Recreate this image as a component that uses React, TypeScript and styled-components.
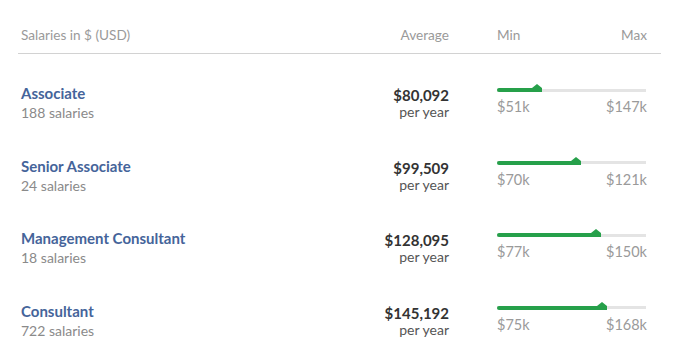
import styled, { createGlobalStyle } from "styled-components";

interface SalaryRow {
  title: string;
  count: number;
  average: string;
  min: string;
  max: string;
  fill: number;
}

const rows: SalaryRow[] = [
  { title: "Associate", count: 188, average: "$80,092", min: "$51k", max: "$147k", fill: 27 },
  { title: "Senior Associate", count: 24, average: "$99,509", min: "$70k", max: "$121k", fill: 53 },
  { title: "Management Consultant", count: 18, average: "$128,095", min: "$77k", max: "$150k", fill: 66.5 },
  { title: "Consultant", count: 722, average: "$145,192", min: "$75k", max: "$168k", fill: 70.5 },
];

const GlobalStyle = createGlobalStyle`
  body {
    margin: 0;
    background: #fff;
    font-family: Lato, "Open Sans", "Liberation Sans", sans-serif;
  }
`;

const Table = styled.div`
  margin-left: 18px;
  width: 643px;
`;

const Grid = styled.div`
  display: grid;
  grid-template-columns: 1fr 120px 150px;
  column-gap: 48px;
  padding: 0 14px 0 3px;
`;

const Header = styled(Grid)`
  height: 54px;
  align-items: center;
  border-bottom: 1px solid #d2d2d2;
  padding-top: 16px;
  box-sizing: border-box;
  font-size: 13.6px;
  color: #9a9a9a;
`;

const HeadRight = styled.div`
  text-align: right;
`;

const HeadRange = styled.div`
  display: flex;
  justify-content: space-between;
`;

const Row = styled(Grid)`
  height: 72.5px;
  align-items: start;
`;

const Name = styled.div`
  padding-top: 30px;
`;

const Title = styled.div`
  font-size: 15px;
  font-weight: 700;
  line-height: 19px;
  color: #45649a;
`;

const Count = styled.div`
  font-size: 14px;
  line-height: 20px;
  color: #8a8a8a;
`;

const Average = styled.div`
  padding-top: 33px;
  text-align: right;
`;

const Amount = styled.div`
  font-size: 15px;
  font-weight: 700;
  line-height: 17px;
  color: #333;
`;

const PerYear = styled.div`
  font-size: 14px;
  line-height: 15px;
  color: #555;
`;

const Range = styled.div`
  padding-top: 34px;
`;

const Track = styled.div`
  position: relative;
  height: 4px;
  margin-right: 1px;
  background: linear-gradient(#e4e4e4, #e4e4e4) 0 0.5px / 100% 3px no-repeat;
`;

const Fill = styled.div`
  position: relative;
  height: 4px;
  border-radius: 2px;
  background: #26a04a;
`;

const Marker = styled.svg`
  position: absolute;
  right: -5px;
  top: -4px;
`;

const Limits = styled.div`
  display: flex;
  justify-content: space-between;
  margin-top: 7px;
  font-size: 14.5px;
  line-height: 16px;
  color: #9a9a9a;
`;

const App = () => (
  <>
    <GlobalStyle />
    <Table>
      <Header>
        <div>Salaries in $ (USD)</div>
        <HeadRight>Average</HeadRight>
        <HeadRange>
          <span>Min</span>
          <span>Max</span>
        </HeadRange>
      </Header>
      {rows.map((r) => (
        <Row key={r.title}>
          <Name>
            <Title>{r.title}</Title>
            <Count>{r.count} salaries</Count>
          </Name>
          <Average>
            <Amount>{r.average}</Amount>
            <PerYear>per year</PerYear>
          </Average>
          <Range>
            <Track>
              <Fill style={{ width: `${r.fill}%` }}>
                <Marker width="10" height="8" viewBox="0 0 10 8">
                  <path d="M0 8 V4 L5 0 L10 4 V8 Z" fill="#26a04a" />
                </Marker>
              </Fill>
            </Track>
            <Limits>
              <span>{r.min}</span>
              <span>{r.max}</span>
            </Limits>
          </Range>
        </Row>
      ))}
    </Table>
  </>
);

export default App;
